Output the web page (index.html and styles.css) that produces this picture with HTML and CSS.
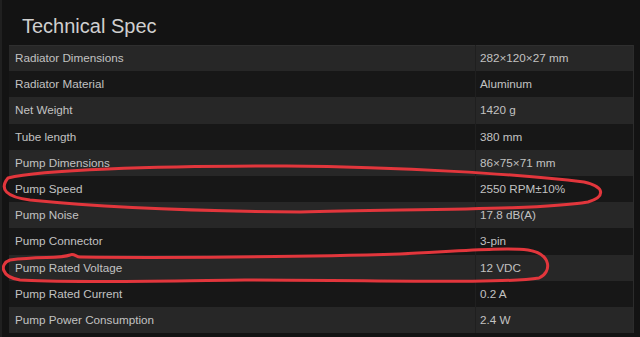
FILE: index.html
```html
<!DOCTYPE html>
<html lang="en">
<head>
<meta charset="utf-8">
<title>Technical Spec</title>
<link rel="stylesheet" href="styles.css">
</head>
<body>
<div class="page">
  <h2 class="title">Technical Spec</h2>
  <div class="spec">
    <div class="row light"><div class="label">Radiator Dimensions</div><div class="value">282×120×27 mm</div></div>
    <div class="row dark"><div class="label">Radiator Material</div><div class="value">Aluminum</div></div>
    <div class="row light"><div class="label">Net Weight</div><div class="value">1420 g</div></div>
    <div class="row dark"><div class="label">Tube length</div><div class="value">380 mm</div></div>
    <div class="row light"><div class="label">Pump Dimensions</div><div class="value">86×75×71 mm</div></div>
    <div class="row dark"><div class="label">Pump Speed</div><div class="value">2550 RPM±10%</div></div>
    <div class="row light"><div class="label">Pump Noise</div><div class="value">17.8 dB(A)</div></div>
    <div class="row dark"><div class="label">Pump Connector</div><div class="value">3-pin</div></div>
    <div class="row light"><div class="label">Pump Rated Voltage</div><div class="value">12 VDC</div></div>
    <div class="row dark"><div class="label">Pump Rated Current</div><div class="value">0.2 A</div></div>
    <div class="row light"><div class="label">Pump Power Consumption</div><div class="value">2.4 W</div></div>
  </div>
  <svg class="marks" width="640" height="337" viewBox="0 0 640 337" aria-hidden="true">
    <path d="M 8 178 C 40 170, 150 166, 286 166 C 400 167, 520 174, 584 182 C 606 187, 605 197, 588 202 C 540 210, 420 209, 300 212 C 180 211, 90 206, 30 200 C 6 197, -1 189, 8 178 Z"/>
    <path d="M 10 260 C 40 256, 60 259, 70 255 C 74 253, 76 257, 80 257 C 160 258, 300 257, 400 254 C 460 251, 505 247, 528 250 C 552 254, 552 272, 539 278 C 500 284, 380 280, 245 280 C 150 281, 60 283, 20 280 C 1 277, -1 264, 10 260 Z"/>
  </svg>
</div>
</body>
</html>
```
FILE: styles.css
```css
html, body {
  margin: 0;
  padding: 0;
  background: #131313;
}

.page {
  position: relative;
  width: 640px;
  height: 337px;
  box-sizing: border-box;
  padding: 0 6px 0 7px;
  border-left: 2px solid #202020;
  font-family: "Liberation Sans", Arial, sans-serif;
  overflow: hidden;
}

.title {
  margin: 0;
  height: 45px;
  box-sizing: border-box;
  padding: 14px 0 0 13px;
  font-size: 20px;
  line-height: 24px;
  font-weight: normal;
  color: #cfcfcf;
}

.spec {
  border-right: 1px solid #2c2c2c;
}

.row {
  display: grid;
  grid-template-columns: 466px 1fr;
  height: 26.2px;
  font-size: 11.7px;
  line-height: 26px;
  color: #c2c2c2;
}

.row.light {
  background: #272727;
}

.row.dark {
  background: #171717;
}

.row:first-child {
  box-shadow: inset 0 1px 0 #2f2f2f;
}

.label {
  padding-left: 6px;
}

.value {
  padding-left: 4px;
  border-left: 1px solid #1f1f1f;
}

.marks {
  position: absolute;
  left: -2px;
  top: 0;
  pointer-events: none;
}

.marks path {
  fill: none;
  stroke: #e2363c;
  stroke-width: 3;
  stroke-linejoin: round;
}
```
